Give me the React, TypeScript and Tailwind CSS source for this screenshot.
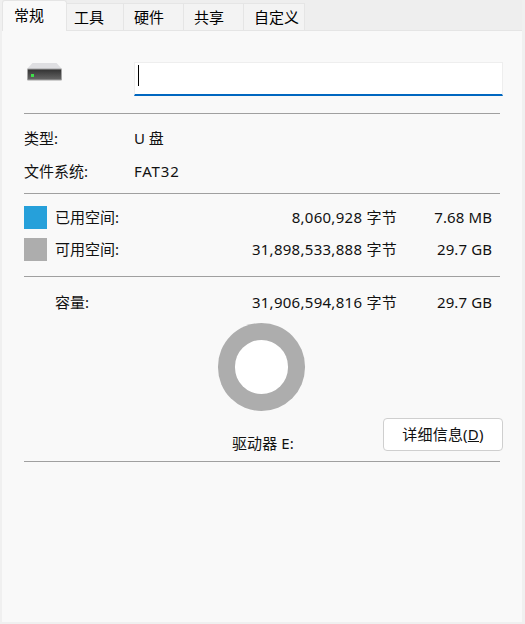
const FONT = "font-['Noto_Sans','Noto_Sans_CJK_SC',sans-serif]";

function Tab({ label, w, active }: { label: string; w: string; active?: boolean }) {
  if (active) {
    return (
      <div className={`${w} h-[31px] bg-[#f9f9f9] border border-b-0 border-[#e5e5e5] rounded-t-[3px] pl-[11px] pt-[2px] text-[15px] leading-[24px] text-black z-10`}>
        {label}
      </div>
    );
  }
  return (
    <div className={`${w} h-[27px] mt-[3px] bg-[#f3f3f3] border-t border-r border-[#e5e5e5] pt-[1px] text-[15px] leading-[24px] text-black`}>
      {label}
    </div>
  );
}

function Divider() {
  return <div className="h-px w-[476px] bg-[#a0a0a0]" />;
}

function DriveIcon() {
  return (
    <svg width="35" height="18" viewBox="0 0 35 18">
      <defs>
        <linearGradient id="driveFront" x1="0" y1="0" x2="0" y2="1">
          <stop offset="0" stopColor="#333333" />
          <stop offset="1" stopColor="#666666" />
        </linearGradient>
      </defs>
      <path d="M5.5 0 H29.5 L35 6 H0 Z" fill="#dfdfe2" />
      <rect x="0" y="5.5" width="35" height="12" rx="1" fill="#a4a4a4" />
      <rect x="1" y="6.5" width="33" height="10" fill="url(#driveFront)" />
      <rect x="4" y="11" width="3" height="3" fill="#3ee04a" />
    </svg>
  );
}

function SpaceRow({ swatch, label, bytes, size }: { swatch?: string; label: string; bytes: string; size: string }) {
  return (
    <div className="flex items-center h-6 w-[468px] text-[15px]">
      {swatch ? <div className={`w-[23px] h-[23px] ${swatch}`} /> : <div className="w-[23px] h-[23px]" />}
      <span className="ml-2">{label}</span>
      <span className="ml-auto tracking-[0.28px]">{bytes} 字节</span>
      <span className="w-[95px] text-right tracking-[0.1px]">{size}</span>
    </div>
  );
}

export default function App() {
  return (
    <div className={`${FONT} w-[525px] h-[624px] bg-[#f0f0f0] pl-[2px] pr-[3px] pb-[2px] flex flex-col text-[#111] overflow-hidden`}>
      <div className="flex h-[30px] shrink-0 bg-[#eeeeee]">
        <Tab label="常规" w="w-[65px]" active />
        <Tab label="工具" w="w-[57px] pl-[7px]" />
        <Tab label="硬件" w="w-[60px] pl-[10px]" />
        <Tab label="共享" w="w-[60px] pl-[10px]" />
        <Tab label="自定义" w="w-[61px] pl-[10px]" />
      </div>
      <div className="flex-1 bg-[#f9f9f9] border-t border-[#e5e5e5] pl-[22px] flex flex-col">
        <div className="flex items-start h-[82px]">
          <div className="mt-[32px] ml-[3px] leading-none"><DriveIcon /></div>
          <div className="ml-[72px] mt-[31px] w-[369px] h-[34px] bg-white border border-[#eeeeee] border-b-2 border-b-[#0067c0] pl-[3px] pt-[2px]">
            <div className="w-px h-[21px] bg-black" />
          </div>
        </div>
        <Divider />
        <div className="flex items-center h-6 mt-[12px] text-[15px]">
          <span className="w-[110px]">类型:</span>
          <span>U 盘</span>
        </div>
        <div className="flex items-center h-6 mt-[9px] text-[15px]">
          <span className="w-[110px]">文件系统:</span>
          <span className="tracking-[0.8px]">FAT32</span>
        </div>
        <div className="mt-[10px]"><Divider /></div>
        <div className="mt-[11px]"><SpaceRow swatch="bg-[#26a0da]" label="已用空间:" bytes="8,060,928" size="7.68 MB" /></div>
        <div className="mt-[8px]"><SpaceRow swatch="bg-[#adadad]" label="可用空间:" bytes="31,898,533,888" size="29.7 GB" /></div>
        <div className="mt-[15px]"><Divider /></div>
        <div className="mt-[13px]"><SpaceRow label="容量:" bytes="31,906,594,816" size="29.7 GB" /></div>
        <div className="relative h-[147px] w-[476px]">
          <div className="mt-[9px] ml-[193.5px] w-[87.5px] h-[87.5px] rounded-full bg-[#adadad] flex items-center justify-center">
            <div className="w-[53.5px] h-[53.5px] rounded-full bg-white" />
          </div>
          <div className="ml-[208px] mt-[20px] text-[15px] leading-6 tracking-[0.1px]">驱动器 E:</div>
          <button className="absolute left-[359px] top-[104px] w-[120px] h-[33px] bg-white border border-[#cfcfcf] rounded-[4px] text-[15px] tracking-[0.2px] text-[#111]">
            详细信息(<span className="underline">D</span>)
          </button>
        </div>
        <Divider />
      </div>
    </div>
  );
}
